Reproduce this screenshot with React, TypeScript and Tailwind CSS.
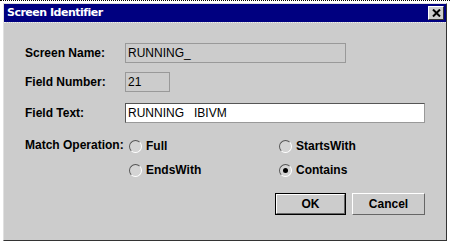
import React from 'react';

const sans = { fontFamily: '"Liberation Sans", Arial, sans-serif' };

function Radio({ label, checked }: { label: string; checked?: boolean }) {
    return (
        <div className="flex items-center h-[20px] gap-[4px]">
            <div className="w-[13px] h-[13px] rounded-full border border-t-[#555555] border-l-[#555555] border-b-white border-r-white bg-[#d4d4d4] flex items-center justify-center">
                {checked && <div className="w-[5px] h-[5px] rounded-full bg-black" />}
            </div>
            <span className="text-[12px] font-bold text-black">{label}</span>
        </div>
    );
}

function Field({ label, value, width, editable }: { label: string; value: string; width: string; editable?: boolean }) {
    return (
        <div className="flex items-center h-[20px]">
            <div className="w-[100px] text-[12px] font-bold text-black">{label}</div>
            <div
                className={
                    editable
                        ? `${width} h-[20px] bg-white border border-t-[#555555] border-l-[#555555] border-b-[#999999] border-r-[#999999] px-[2px] flex items-center text-[12px] text-black whitespace-pre`
                        : `${width} h-[20px] bg-[#cccccc] border border-[#999999] px-[2px] flex items-center text-[12px] text-black whitespace-pre`
                }
            >
                {value}
            </div>
        </div>
    );
}

export default function App() {
    return (
        <div className="w-[450px] h-[242px] bg-white border-t border-dotted border-black overflow-hidden" style={sans}>
            <div className="ml-[3px] mt-[2px] w-[444px] h-[238px] bg-[#cccccc] border border-t-[#e0e0e0] border-l-[#e0e0e0] border-b-[#333333] border-r-[#333333] flex flex-col">
                <div className="h-[18px] bg-[#000080] flex items-center justify-between pl-[3px] pr-[2px]">
                    <span
                        className="text-white text-[11px] font-bold"
                        style={{ fontFamily: '"DejaVu Sans", Verdana, sans-serif', letterSpacing: '-0.5px' }}
                    >
                        Screen Identifier
                    </span>
                    <div className="w-[16px] h-[14px] bg-[#cccccc] border border-t-white border-l-white border-b-[#333333] border-r-[#333333] flex items-center justify-center">
                        <svg width="9" height="8" viewBox="0 0 9 8">
                            <path d="M1 0.5 L8 7.5 M8 0.5 L1 7.5" stroke="black" strokeWidth="2" />
                        </svg>
                    </div>
                </div>
                <div className="border-t border-dotted border-[#eeeeee]" />
                <div className="flex flex-col pl-[21px] pr-[21px] pt-[20px]">
                    <Field label="Screen Name:" value="RUNNING_" width="w-[221px]" />
                    <div className="mt-[9px]">
                        <Field label="Field Number:" value="21" width="w-[45px]" />
                    </div>
                    <div className="mt-[11px]">
                        <Field label="Field Text:" value="RUNNING   IBIVM" width="w-[300px]" editable />
                    </div>
                    <div className="flex mt-[13px]">
                        <div className="w-[104px] h-[18px] flex items-center text-[12px] font-bold text-black">Match Operation:</div>
                        <div className="grid grid-cols-[150px_auto] gap-y-[4px]">
                            <Radio label="Full" />
                            <Radio label="StartsWith" />
                            <Radio label="EndsWith" />
                            <Radio label="Contains" checked />
                        </div>
                    </div>
                    <div className="flex justify-end gap-[6px] mt-[13px]">
                        <div className="w-[71px] h-[22px] border border-black">
                            <div className="w-full h-full border border-t-white border-l-white border-b-[#666666] border-r-[#666666] flex items-center justify-center text-[12px] font-bold text-black">
                                OK
                            </div>
                        </div>
                        <div className="w-[73px] h-[22px] border border-t-white border-l-white border-b-[#666666] border-r-[#666666] flex items-center justify-center text-[12px] font-bold text-black">
                            Cancel
                        </div>
                    </div>
                </div>
            </div>
        </div>
    );
}
